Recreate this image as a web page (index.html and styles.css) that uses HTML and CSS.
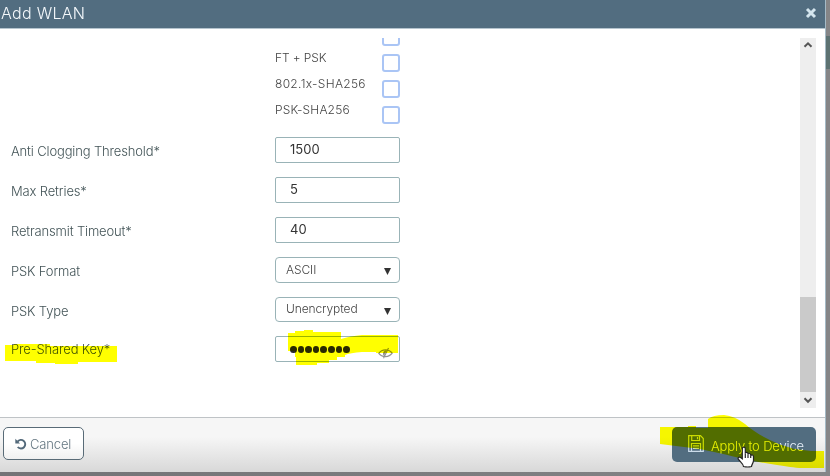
FILE: index.html
```html
<!DOCTYPE html>
<html lang="en">
<head>
<meta charset="utf-8">
<title>Add WLAN</title>
<link rel="stylesheet" href="styles.css">
</head>
<body>
<div class="dialog">
  <header class="titlebar">
    <h1>Add WLAN</h1>
    <svg class="close" viewBox="0 0 12 12"><path d="M2 2l8 8M10 2l-8 8"/></svg>
  </header>
  <main class="body">
    <div class="form">
      <div class="checks">
        <div class="check"><span></span><i class="box"></i></div>
        <div class="check"><span class="short">FT + PSK</span><i class="box"></i></div>
        <div class="check"><span class="wide">802.1x-SHA256</span><i class="box"></i></div>
        <div class="check"><span>PSK-SHA256</span><i class="box"></i></div>
      </div>
      <div class="row"><label>Anti Clogging Threshold*</label><div class="input">1500</div></div>
      <div class="row"><label>Max Retries*</label><div class="input">5</div></div>
      <div class="row"><label>Retransmit Timeout*</label><div class="input">40</div></div>
      <div class="row"><label>PSK Format</label><div class="input select"><span>ASCII</span><i class="arrow"></i></div></div>
      <div class="row"><label>PSK Type</label><div class="input select type"><span>Unencrypted</span><i class="arrow"></i></div></div>
      <div class="row key"><label>Pre-Shared Key*</label>
        <div class="input password">
          <span class="dots"><i></i><i></i><i></i><i></i><i></i><i></i><i></i><i></i></span>
          <svg class="eye" viewBox="0 0 15 12"><path d="M.8 6.3C4 1.8 10.8 1.6 14.2 6.1 11 10.5 4.200 10.8.8 6.300zM10.500 1L5.500 11.300"/><path class="iris" d="M8.800 3L6 9C4.200 7.500 4.600 3.500 8.800 3z"/></svg>
        </div>
      </div>
    </div>
    <div class="scrollbar">
      <svg viewBox="0 0 16 14"><path d="M4.500 8.800L8 5.300l3.500 3.500"/></svg>
      <div class="thumb"></div>
      <svg viewBox="0 0 16 14"><path d="M4.500 5.300L8 8.800l3.500-3.500"/></svg>
    </div>
  </main>
  <footer class="actions">
    <button class="cancel">
      <svg viewBox="0 0 12 12"><path class="turn" d="M2.500 3.600A4.300 4.300 0 1 1 2.700 9"/><path class="tip" d="M.3.800V5.500H5z"/></svg>
      <span>Cancel</span>
    </button>
    <button class="apply">
      <svg viewBox="0 0 16 17"><path d="M.7.700H12.500L15.300 3.500V16.300H.7zM3.700.900V5.500H11.500V.900M9.500 2V4.300M3.500 16V8.500H12.500V16M5 10.800H11M5 13.300H11"/></svg>
      <span>Apply to Device</span>
    </button>
  </footer>
</div>
<i class="backdrop-patch"></i>
<svg class="marker" viewBox="0 0 830 476">
  <path d="M5 345H14V344H50V346H117V362H78V364H55V363H36V361H5z"/>
  <path d="M288 333H295V331H304V330H313V332H341V339Q350 336 362 335H398V353H376V352H362Q350 353 345 355V357H337V360H329V363H317V365H296V357H295V351H288z"/>
  <path d="M660 427H688V426H696V428H708V419Q713 415 724 415Q735 416 745 424C760 437 779 445 795 449L811 451H824V468H803C793 468 787 466 777 465C748 461 730 455 700 449L660 444z"/>
</svg>
<svg class="pointer" viewBox="0 0 18 22"><path d="M5.300 12.800V2.700C5.300.500 8.300.500 8.300 2.700V7.500C8.300 6 11 6 11 7.800V8.500C11.300 7 13.700 7.200 13.700 9V9.700C14.200 8.500 16.500 8.800 16.500 10.700V14.500C16.500 17 14.500 18.500 14.500 20.500Q11 21.500 6.500 20.500C6.500 18 3 15.800 1.300 13.200C.3 11.300 2.800 10.500 4 11.800z"/><path class="fingers" d="M8.300 7.500V12M11 8.500V12M13.700 9.700V12"/></svg>
</body>
</html>
```

FILE: styles.css
```css
* { box-sizing: border-box; }
body {
  margin: 0;
  width: 830px;
  height: 476px;
  overflow: hidden;
  background: linear-gradient(90deg, #737376, #858587);
  font-family: Inter, "Liberation Sans", sans-serif;
  font-weight: 300;
  font-size: 13px;
  color: #435457;
}
.dialog {
  width: 826px;
  height: 472px;
  display: flex;
  flex-direction: column;
  background: #fff;
  border-right: 1px solid #a5bac6;
}
.titlebar {
  height: 29px;
  flex: none;
  display: flex;
  align-items: center;
  justify-content: space-between;
  padding: 0 8px 2px 1px;
  background: #526d80;
  border-bottom: 1px solid #b5c4ce;
}
h1 { margin: 0; font-size: 16px; font-weight: 300; color: #f4f8fb; letter-spacing: .3px; }
.close { width: 12px; height: 12px; stroke: #d4e5ee; stroke-width: 3; fill: none; }
.body {
  height: 388px;
  flex: none;
  display: flex;
  justify-content: space-between;
  padding: 9px 9px 9px 11px;
}
.form { width: 389px; height: 370px; overflow: hidden; }
.checks { margin: -10px 0 5px 264px; }
.check { height: 26px; display: flex; justify-content: space-between; align-items: flex-start; }
.check span { margin-top: -4px; line-height: 15px; font-size: 12px; letter-spacing: .15px; color: #444; white-space: nowrap; }
.check .short { letter-spacing: -.1px; }
.check .wide { letter-spacing: .3px; }
.box { width: 18px; height: 18px; border: 2px solid #aac5f5; border-radius: 3px; }
.row { height: 40px; display: flex; justify-content: space-between; }
.row label { line-height: 28px; letter-spacing: -.15px; white-space: nowrap; }
.input {
  width: 125px;
  height: 26px;
  border: 1px solid #99b3b7;
  border-radius: 2px;
  background: #fff;
  padding-left: 14px;
  line-height: 23px;
  font-weight: 400;
  color: #333;
}
.select {
  display: flex;
  justify-content: space-between;
  padding: 0 8px 0 10px;
  border-radius: 4px;
  font-size: 12px;
  font-weight: 300;
  letter-spacing: -.1px;
  color: #444;
}
.type { height: 25px; line-height: 22px; }
.arrow { width: 7px; height: 7px; margin-top: 10px; background: #333; clip-path: polygon(0 0, 100% 0, 50% 100%); }
.key { margin-top: -1px; }
.key label { line-height: 27px; }
.password { display: flex; justify-content: space-between; padding-right: 6px; }
.dots { display: flex; gap: 1px; padding-top: 9px; }
.dots i { width: 6.600px; height: 7px; border-radius: 50%; background: #292929; }
.eye { width: 15px; height: 12px; margin-top: 10px; fill: none; stroke: #929292; stroke-width: 1.200; }
.eye .iris { fill: #929292; stroke: none; }
.scrollbar { width: 16px; height: 370px; display: flex; flex-direction: column; background: #eee; }
.scrollbar svg { width: 16px; height: 14px; fill: none; stroke: #555; stroke-width: 2; }
.scrollbar svg:last-child { height: 16px; }
.thumb { height: 95px; margin-top: auto; background: #cacaca; }
.actions {
  flex: 1;
  display: flex;
  justify-content: space-between;
  align-items: flex-start;
  padding: 9px 9px 0 3px;
  border-top: 1px solid #bfc3c6;
  background: linear-gradient(#f6f6f6 35%, #d8d8d8);
}
button { display: flex; align-items: center; margin: 0; font: inherit; letter-spacing: -.15px; white-space: nowrap; }
.cancel { width: 81px; height: 33px; padding: 0 0 0 11px; gap: 3px; border: 1px solid #596b77; border-radius: 5px; background: linear-gradient(#fff 50%, #f0f0f0); color: #647681; }
.cancel svg { width: 12px; height: 12px; }
.turn { fill: none; stroke: #526879; stroke-width: 1.900; }
.tip { fill: #526879; }
.apply { width: 144px; height: 35px; padding: 0 0 0 16px; gap: 7px; border: 0; border-radius: 5px; background: #526d80; color: #e8f1fa; }
.apply svg { width: 16px; height: 17px; margin-top: -2px; fill: none; stroke: #cbdcea; stroke-width: 1.200; }
.apply span { margin-top: 2px; }
.backdrop-patch { position: absolute; left: 826px; top: 36px; width: 4px; height: 33px; background: #5d7272; }
.marker { position: absolute; left: 0; top: 0; width: 830px; height: 476px; fill: #ff0; mix-blend-mode: multiply; pointer-events: none; }
.pointer { position: absolute; left: 737px; top: 446px; width: 18px; height: 22px; fill: #fff; stroke: #242424; stroke-width: 1.200; }
.pointer .fingers { fill: none; }
```
